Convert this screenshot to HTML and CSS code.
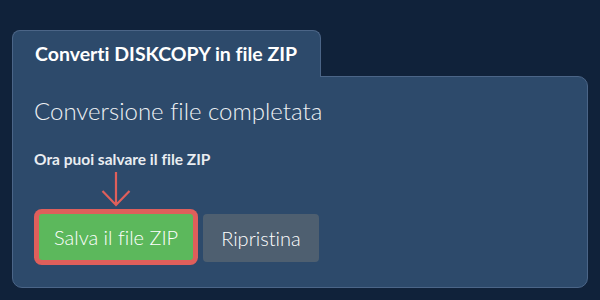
FILE: index.html
```html
<!DOCTYPE html>
<html lang="it">
<head>
    <meta charset="UTF-8">
    <meta name="viewport" content="width=device-width, initial-scale=1.0">
    <title>Converti DISKCOPY in file ZIP</title>
    <link rel="stylesheet" href="styles.css">
</head>
<body>

    <!-- Scheda -->
    <div class="tab">Converti DISKCOPY in file ZIP</div>

    <!-- Pannello -->
    <div class="panel">
        <h2>Conversione file completata</h2>
        <p class="info">Ora puoi salvare il file ZIP</p>

        <div class="actions">
            <button class="btn btn-save">
                <svg class="hint-arrow" width="30" height="36" viewBox="0 0 30 36">
                    <path d="M15 1 L15 34 M1.5 20 L15 34 L28.5 20" fill="none" stroke="#df5f5b" stroke-width="2.2"/>
                </svg>
                Salva il file ZIP
            </button>
            <button class="btn btn-reset">Ripristina</button>
        </div>
    </div>

</body>
</html>
```

FILE: styles.css
```css
* {
    margin: 0;
    padding: 0;
    box-sizing: border-box;
    font-family: Lato, "Open Sans", sans-serif;
    font-variant-ligatures: none;
}
body {
    background-color: #10223a;
    color: #ffffff;
    padding: 30px 12px 0;
}
.tab {
    display: inline-block;
    position: relative;
    z-index: 1;
    background: #2d4a6b;
    border: 1px solid #4b6587;
    border-bottom: none;
    border-radius: 8px 8px 0 0;
    padding: 12px 23px 13px 22px;
    margin-bottom: -1px;
    font-size: 19.5px;
    font-weight: 700;
    line-height: 22px;
    height: 47px;
}
.panel {
    background: #2d4a6b;
    border: 1px solid #4b6587;
    border-radius: 0 10px 10px 10px;
    padding: 20px 21px 20px;
}
.panel h2 {
    font-size: 24px;
    font-weight: 300;
    line-height: 1.2;
    color: #eef1f4;
}
.info {
    margin-top: 24px;
    font-size: 15.5px;
    font-weight: 700;
    line-height: 1.2;
    color: #e9edf1;
}
.actions {
    display: flex;
    align-items: flex-start;
    gap: 10px;
    margin-top: 46px;
    padding-left: 5px;
    padding-bottom: 5px;
}
.btn {
    border: none;
    border-radius: 4px;
    color: #ffffff;
    font-size: 20px;
    font-weight: 300;
    line-height: 22px;
    padding: 12px 17px;
    cursor: pointer;
}
.btn-save {
    position: relative;
    background: #5cb85c;
    box-shadow: 0 0 0 5px #df5f5b;
    border-radius: 3px;
    padding: 12px 15px;
}
.btn-reset {
    background: #4e5f70;
    padding: 13px 18px;
}
.hint-arrow {
    position: absolute;
    left: 50%;
    bottom: 100%;
    margin-left: -15px;
    margin-bottom: 7px;
}
```
